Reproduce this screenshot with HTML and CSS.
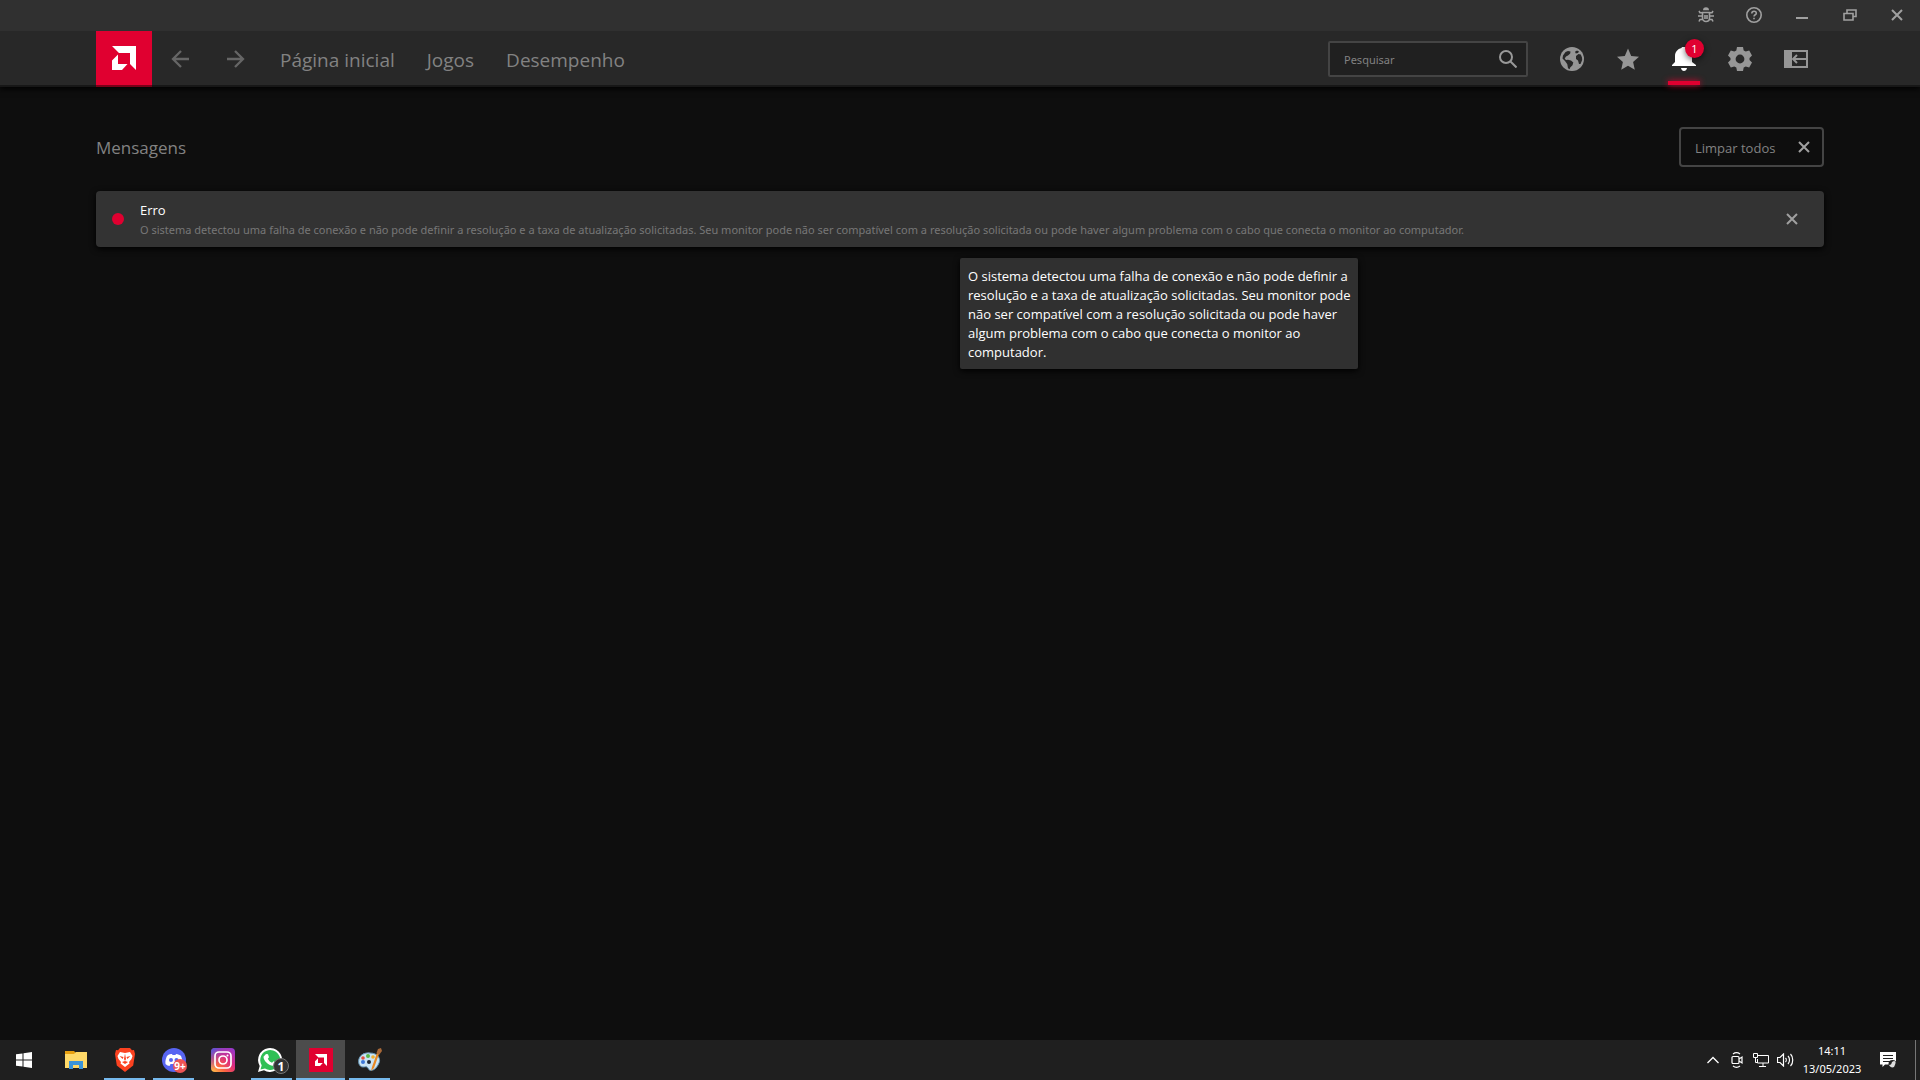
FILE: index.html
```html
<!DOCTYPE html>
<html lang="pt-BR">
<head>
<meta charset="utf-8">
<title>AMD Software</title>
<link rel="stylesheet" href="styles.css">
</head>
<body>
<svg class="sprite" aria-hidden="true">
  <symbol id="close" viewBox="0 0 12 12"><path d="M1 1l10 10M11 1L1 11" fill="none" stroke="currentColor" stroke-width="2"/></symbol>
  <symbol id="amd" viewBox="0 0 24 24"><path d="M0 0h24v24l-6-6V7H7zM6 8.500V18h9.500L10 24H0V14.500z" fill="#fff"/></symbol>
</svg>
<div class="window">
  <div class="titlebar">
    <button class="win-btn" aria-label="Relatar um problema"><svg width="16" height="16" viewBox="0 0 16 16" fill="none" stroke="currentColor" stroke-width="1.600"><path d="M4.500 5.500h7v5.500c0 2-1.500 3.500-3.500 3.500s-3.500-1.500-3.500-3.500zM7 8v4M9 8v4M0 9h4M12 9h4M1 4l1 1.700h3M15 4l-1 1.700h-3M1 14.500l1-2h3M15 14.500l-1-2h-3"/><path d="M5 3.200a3 3 0 0 1 6 0z" fill="currentColor" stroke="none"/></svg></button>
    <button class="win-btn" aria-label="Ajuda"><svg width="16" height="16" viewBox="0 0 16 16" fill="none" stroke="currentColor" stroke-width="1.600"><circle cx="8" cy="8" r="7.200"/><path d="M5.800 6.500c0-3 4.500-3 4.500-.3 0 1.600-2.300 1.500-2.300 3.300M8 10.700v1.600"/></svg></button>
    <button class="win-btn" aria-label="Minimizar"><svg width="12" height="12" viewBox="0 0 12 12"><path d="M0 8h12v2H0z" fill="currentColor"/></svg></button>
    <button class="win-btn" aria-label="Restaurar"><svg width="14" height="12" viewBox="0 0 14 12" fill="none" stroke="currentColor" stroke-width="1.600"><path d="M1 4.500h9v6.500H1zM4 4V1h9v6.500h-3"/></svg></button>
    <button class="win-btn" aria-label="Fechar"><svg width="12" height="12"><use href="#close"/></svg></button>
  </div>
  <header class="header">
    <a class="logo" href="#" aria-label="AMD"><svg width="24" height="24"><use href="#amd"/></svg></a>
    <div class="histories">
      <button class="history" aria-label="Voltar"><svg width="18" height="18" viewBox="0 0 18 18"><path d="M18 9H2M10 1L2 9l8 8" fill="none" stroke="currentColor" stroke-width="2.300"/></svg></button>
      <button class="history" aria-label="Avançar"><svg width="18" height="18" viewBox="0 0 18 18"><path d="M0 9h16M8 1l8 8-8 8" fill="none" stroke="currentColor" stroke-width="2.300"/></svg></button>
    </div>
    <nav class="nav"><a href="#">Página inicial</a><a href="#">Jogos</a><a href="#">Desempenho</a></nav>
    <label class="search"><input type="text" placeholder="Pesquisar" aria-label="Pesquisar"><svg width="18" height="18" viewBox="0 0 18 18" fill="none" stroke="currentColor" stroke-width="2"><circle cx="7" cy="7" r="6"/><path d="M11.500 11.500l6 6"/></svg></label>
    <div class="tools">
      <button class="tool" aria-label="Web"><svg width="24" height="24" viewBox="0 0 24 24"><circle cx="12" cy="12" r="12" fill="currentColor"/><path d="M5.500 5L8 4l2.500.5-.3 2L8 8.500 6 9.500l-1.300 2L6 13l2-.2 3 .7 2.300 2-.8 2.700-2.300 2.300-.6 1.700L8 21.300l-.7-4L5 14l-2.500-2.500L3 8.500zM15 4.800l2-1.300 2 1-1 1.500-2.200.5zM16 9l2.500-2 2.300.5 1.200 3 .2 2.500-1.700 4-1.500 0-1-3.500-2-1.500z" fill="#282828"/></svg></button>
      <button class="tool" aria-label="Favoritos"><svg width="24" height="24" viewBox="0 0 24 24"><path d="M12 1.500l3.200 7.400 7.800.8-5.900 5.200 1.700 7.900L12 18.700l-6.800 4.100 1.700-7.900L1 9.700l7.800-.8z" fill="currentColor"/></svg></button>
      <button class="tool tool-active" aria-label="Mensagens"><svg width="24" height="24" viewBox="0 0 24 24"><path d="M0 19v-1l3-3V9c0-4 2.500-7 6.500-8 0-1.500 4-1.500 4.500 0 4 1 6 4 6 8v6l4 3v1zM9 21h6c-.5 4-5.500 4-6 0z" fill="currentColor"/></svg><span class="badge">1</span></button>
      <button class="tool" aria-label="Configurações"><svg width="24" height="24" viewBox="0 0 24 24"><path fill="currentColor" fill-rule="evenodd" d="M9 0h6l.7 3.500 2 1.100L21.200 3.500l2.800 5-2.500 2.400v2.200L24 15.500l-2.800 5-3.500-1.100-2 1.100L15 24H9l-.7-3.500-2-1.100-3.500 1.100-2.800-5 2.500-2.400v-2.200L0 8.500l2.800-5 3.500 1.100 2-1.100zM12 7.600a4.400 4.400 0 1 0 0 8.800 4.400 4.400 0 0 0 0-8.800z"/></svg></button>
      <button class="tool" aria-label="Barra lateral"><svg width="24" height="18" viewBox="0 0 24 18"><path d="M0 0h8v18H0z" fill="currentColor"/><path d="M7 1h16v16H7M23 9H9M13 5L9 9l4 4" fill="none" stroke="currentColor" stroke-width="2"/></svg></button>
    </div>
  </header>
  <main class="content">
    <div class="heading"><h1>Mensagens</h1><button class="clear"><span>Limpar todos</span><svg width="12" height="12"><use href="#close"/></svg></button></div>
    <article class="message">
      <span class="dot"></span>
      <div class="message-text"><h2>Erro</h2><p>O sistema detectou uma falha de conexão e não pode definir a resolução e a taxa de atualização solicitadas. Seu monitor pode não ser compatível com a resolução solicitada ou pode haver algum problema com o cabo que conecta o monitor ao computador.</p></div>
      <button class="dismiss" aria-label="Dispensar"><svg width="12" height="12"><use href="#close"/></svg></button>
      <div class="tooltip" role="tooltip">O sistema detectou uma falha de conexão e não pode definir a<br>resolução e a taxa de atualização solicitadas. Seu monitor pode<br>não ser compatível com a resolução solicitada ou pode haver<br>algum problema com o cabo que conecta o monitor ao<br>computador.</div>
    </article>
  </main>
  <footer class="taskbar">
    <button class="task start" aria-label="Iniciar"><svg width="16" height="16" viewBox="0 0 16 16"><path d="M0 2.300L6.500 1.400v6.100H0zM7.500 1.200L16 0v7.500H7.500zM0 8.500h6.500v6.100L0 13.700zM7.500 8.500H16V16l-8.500-1.200z" fill="#fff"/></svg></button>
    <button class="task" aria-label="Explorador de Arquivos"><svg width="22" height="18" viewBox="0 0 22 18"><path d="M0 0h9l2 2h11v15H0z" fill="#e8a010"/><path d="M0 3h9l2-2h11v16H0z" fill="#ffd968"/><path d="M4 10h14v8h-4v-4H8v4H4z" fill="#3b94d8"/></svg></button>
    <button class="task task-open" aria-label="Brave"><svg width="20" height="24" viewBox="0 0 20 24"><path d="M5 0h10l2 2.300 2-.3 1 4-1.800 11.500L10 24 1.800 17.500 0 6l1-4 2 .3z" fill="#fb4220"/><path d="M5 4l5 1 5-1 2.500 4-1 3-2.500 3 .5 1.500L10 19l-4.500-3.500L6 14l-2.500-3-1-3z" fill="#fff"/><path d="M4.500 8l4 1-.8 2zM15.500 8l-4 1 .8 2zM10 5.500l1 5.500-1 2-1-2zM7 14l3-1 3 1-3 2z" fill="#fb4220"/></svg></button>
    <button class="task task-open" aria-label="Discord"><svg width="26" height="26" viewBox="0 0 26 26"><circle cx="13" cy="13" r="12" fill="#5865f2"/><path d="M6 9c2-2 4-2 5-2l.5 1h3L15 7c2 0 4 1 5 2 1 3 2 5 1.500 8-2 2-3 2-4 2l-1-2h-7l-1 2c-1 0-3-1-4-2C4 14 5 11 6 9z" fill="#fff"/><circle cx="10" cy="13" r="2" fill="#5865f2"/><circle cx="15.500" cy="13" r="2" fill="#5865f2"/><circle cx="19" cy="19" r="7" fill="#ed5354"/><text x="19" y="23" text-anchor="middle" class="count-discord">9+</text></svg></button>
    <button class="task" aria-label="Instagram"><svg width="24" height="24" viewBox="0 0 24 24"><defs><linearGradient id="ig" x1="0" y1="1" x2="1" y2="0"><stop offset="0" stop-color="#ffc94d"/><stop offset=".3" stop-color="#fb6440"/><stop offset=".6" stop-color="#dc2b80"/><stop offset="1" stop-color="#8a3bd8"/></linearGradient><linearGradient id="igb" x1="0" y1="0" x2=".5" y2=".5"><stop offset="0" stop-color="#3b5de8"/><stop offset="1" stop-color="#8a3bd8" stop-opacity="0"/></linearGradient></defs><rect width="24" height="24" rx="4" fill="url(#ig)"/><rect width="24" height="24" rx="4" fill="url(#igb)"/><g fill="none" stroke="#fff" stroke-width="1.700"><rect x="4" y="4" width="16" height="16" rx="4"/><circle cx="12" cy="12" r="4"/></g><circle cx="16.500" cy="7.500" r="1" fill="#fff"/></svg></button>
    <button class="task task-open" aria-label="WhatsApp"><svg width="34" height="28" viewBox="0 0 34 28"><path d="M3 26l1.700-6A12 12 0 1 1 9 24.300z" fill="#fff"/><path d="M5.500 23.500l1.200-4.300A10 10 0 1 1 10 22.500z" fill="#2fc055"/><path d="M11 8l2 .3 1 3-1.200 1.500c1 2 2.200 3.200 4.200 4l1.500-1.500 3 1.500c0 2-1.500 3-3.500 3-5-.5-9.500-5-9.500-9z" fill="#fff"/><circle cx="26" cy="20" r="7.500" fill="#333" stroke="#777"/><text x="26" y="25" text-anchor="middle" class="count-whatsapp">1</text></svg></button>
    <button class="task task-open task-active" aria-label="AMD Software"><svg width="24" height="24" viewBox="0 0 24 24"><path d="M0 0h24v24H0z" fill="#e00030"/><use href="#amd" x="6" y="6" width="12" height="12"/></svg></button>
    <button class="task task-open" aria-label="Paint"><svg width="24" height="24" viewBox="0 0 24 24"><path d="M1 16C-1 9 5 4 12 5c8 0 12 6 8 12-3 6-9 7-10 3-1-2-3-1-5-1-2 0-3-1-4-3z" fill="#c9e4f5" stroke="#6595b5"/><circle cx="5" cy="14" r="2" fill="#3d78d8"/><circle cx="5" cy="10" r="1.800" fill="#e05040"/><circle cx="10" cy="8" r="2" fill="#58b848"/><circle cx="15" cy="9" r="1.800" fill="#f0b030"/><circle cx="11" cy="14" r="2" fill="#1c2530"/><path d="M13 23l1-4 5-14 2 1-5 14z" fill="#e88824"/><path d="M18.500 5l1.500-4 3-1 1 3-3 4z" fill="#a86838"/></svg></button>
    <div class="tray">
      <button class="tray-btn" aria-label="Mostrar ícones ocultos"><svg width="12" height="8" viewBox="0 0 12 8"><path d="M.5 7L6 1.500 11.500 7" fill="none" stroke="currentColor" stroke-width="1.300"/></svg></button>
      <button class="tray-btn" aria-label="Reunir agora"><svg width="12" height="16" viewBox="0 0 12 16" fill="none" stroke="currentColor" stroke-width="1.200"><rect x="1" y="4.500" width="7" height="7" rx="1"/><path d="M8 7l3-2v6l-3-2M2 2c2-1.500 5-1.500 7 0M2 14c2 1.500 5 1.500 7 0"/></svg></button>
      <button class="tray-btn" aria-label="Rede"><svg width="16" height="14" viewBox="0 0 16 14" fill="none" stroke="currentColor"><path d="M5 2.500h10.500v7.500H4.500M4.500 6v4M10 10v3M6 13.500h7M.5.500h4v4h-4zM2.500 4.500v5h2"/></svg></button>
      <button class="tray-btn" aria-label="Volume"><svg width="17" height="14" viewBox="0 0 17 14" fill="none" stroke="currentColor" stroke-width="1.200"><path d="M.5 4.500H3L6.500 1v12L3 9.500H.5zM8.500 5c1 1 1 3 0 4M11 3c2 2 2 6 0 8M13.500 1c3 3 3 9 0 12"/></svg></button>
      <div class="clock"><span>14:11</span><span>13/05/2023</span></div>
      <button class="notices" aria-label="Notificações"><svg width="18" height="18" viewBox="0 0 18 18"><path d="M0 1h16v12.500H5L2.500 16v-2.500H0z" fill="#fff"/><path d="M3 4.500h10M3 7.500h10M3 10.500h7" stroke="#222"/><circle cx="12.500" cy="13" r="4" fill="#222"/><path d="M9 14c4 0 1-3 5-4 3 0 1 4 0 6-2 1-4 0-5-2z" fill="#ddd"/></svg></button>
    </div>
  </footer>
</div>
</body>
</html>
```
FILE: styles.css
```css
* { box-sizing: border-box; }
body { margin: 0; background: #0e0e0e; color: #828282; font-family: "Open Sans", "Noto Sans", sans-serif; }
button { padding: 0; border: 0; background: none; color: inherit; font: inherit; }
a { color: inherit; text-decoration: none; }
svg { display: block; flex: none; }
h1, h2, p { margin: 0; font-weight: 400; }
.sprite { position: absolute; width: 0; height: 0; }
.window { display: flex; flex-direction: column; min-height: 100vh; }

.titlebar { position: relative; z-index: 1; display: flex; justify-content: flex-end; height: 31px; padding-bottom: 1px; background: #303030; color: #a0a0a0; }
.win-btn { display: grid; place-items: center; width: 48px; }
.win-btn:last-child { width: 46px; }

.header { display: flex; align-items: center; height: 56px; padding: 0 96px; background: #282828; border-bottom: 2px solid #171717; box-shadow: 0 2px 6px #000; }
.logo { display: grid; place-items: center; width: 56px; height: 56px; margin-bottom: -2px; background: #e00030; border-bottom: 2px solid #780018; }
.histories { display: flex; width: 116px; padding-top: 2px; }
.history { display: grid; place-items: center; width: 56px; height: 52px; color: #666; }
.nav { display: flex; gap: 32px; flex: 1; padding: 4px 0 0 12px; font-size: 19px; line-height: 24px; }
.search { display: flex; align-items: center; width: 200px; height: 36px; margin-top: 2px; padding: 0 9px 0 14px; border: 2px solid #444; border-radius: 2px; background: #202020; color: #999; }
.search input { flex: 1; min-width: 0; padding: 0; border: 0; outline: 0; background: none; color: #828282; font: 11px "Noto Sans", sans-serif; }
.search input::placeholder { color: #828282; }
.tools { display: flex; margin-left: 16px; color: #969696; }
.tool { position: relative; display: grid; place-items: center; width: 56px; height: 54px; padding-top: 2px; }
.tool-active { color: #fff; }
.tool-active::after { content: ""; position: absolute; left: 12px; bottom: 0; width: 32px; height: 4px; background: #e00030; box-shadow: 0 0 6px #e00030; }
.badge { position: absolute; top: 8px; right: 8px; width: 19px; height: 19px; border-radius: 50%; background: #e00030; box-shadow: 0 2px 6px rgba(0, 0, 0, .6); color: #fff; font-size: 11px; line-height: 19px; }

.content { flex: 1; padding: 40px 96px; }
.heading { display: flex; align-items: center; justify-content: space-between; margin-bottom: 24px; }
h1 { padding-top: 2px; font-size: 17px; line-height: 24px; }
.clear { display: flex; align-items: center; justify-content: space-between; width: 145px; height: 40px; padding: 0 12px 0 14px; border: 2px solid #444; border-radius: 4px; font-size: 13px; }
.clear span { padding-top: 2px; }
.clear svg, .dismiss { color: #a0a0a0; }
.message { position: relative; display: flex; align-items: center; min-height: 56px; padding: 0 26px 0 16px; border-radius: 4px; background: #333; box-shadow: 0 2px 6px #000; }
.dot { width: 12px; height: 12px; border-radius: 50%; background: #e00030; }
.message-text { flex: 1; padding: 2px 0 0 16px; }
h2 { color: #fff; font-size: 13px; line-height: 20px; }
.message p { color: #777; font-family: "Noto Sans", sans-serif; font-size: 11px; line-height: 20px; }
.tooltip { position: absolute; top: 67px; left: 50%; padding: 9px 8px 7px; border-radius: 2px; background: #303030; box-shadow: 0 2px 6px #000; color: #fff; font-size: 13px; line-height: 19px; white-space: nowrap; }

.taskbar { display: flex; height: 40px; background: #1f1f1f; color: #fff; }
.task { position: relative; display: grid; place-items: center; width: 49px; }
.start { width: 48px; margin-right: 3px; }
.task-open::after { content: ""; position: absolute; left: 4px; right: 4px; bottom: 0; height: 2px; background: #76b9ed; }
.task-active { background: #4c4c4c; }
.task-active::after { left: 0; right: 0; }
.count-discord { fill: #fff; font: 700 10px "Noto Sans", sans-serif; }
.count-whatsapp { fill: #fff; font: 700 12px "Noto Sans", sans-serif; }
.tray { display: flex; margin-left: auto; padding-right: 4px; }
.tray-btn { display: grid; place-items: center; width: 24px; }
.clock { display: flex; flex-direction: column; justify-content: center; width: 70px; text-align: center; font: 11px/18px "Noto Sans", sans-serif; }
.notices { display: grid; place-items: center; width: 49px; padding-right: 5px; border-right: 1px solid #777; }
```
